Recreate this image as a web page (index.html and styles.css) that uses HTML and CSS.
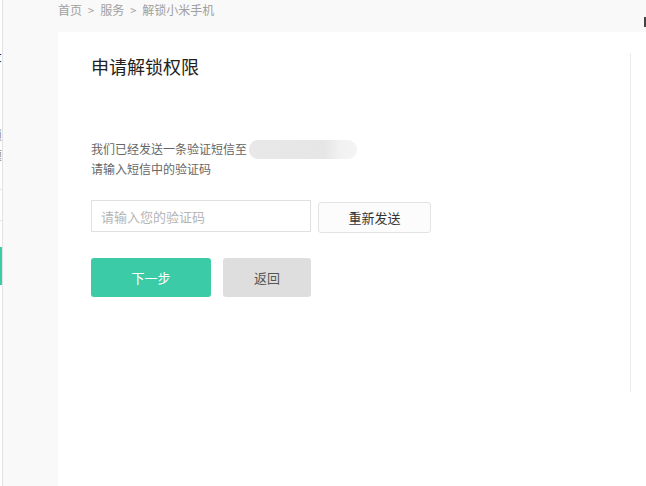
FILE: index.html
```html
<!DOCTYPE html>
<html lang="zh-CN">
<head>
    <meta charset="UTF-8">
    <meta name="viewport" content="width=device-width, initial-scale=1.0">
    <title>申请解锁权限</title>
    <link rel="stylesheet" href="styles.css">
</head>
<body>
    <div class="page">
        <!-- 左侧菜单（只露出右边一点） -->
        <div class="sidebar">
            <div class="side-inner">
                <div class="side-title">解锁记录</div>
                <div class="side-item side-item-first">申请解锁</div>
                <div class="side-item">常见问题</div>
                <div class="side-sep side-sep-first"></div>
                <div class="side-sep"></div>
                <div class="side-active"></div>
            </div>
        </div>

        <div class="main">
            <div class="crumb">
                <span>首页<i class="gt">&gt;</i>服务<i class="gt">&gt;</i>解锁小米手机</span>
                <span class="edge-mark"></span>
            </div>

            <div class="card">
                <div class="card-body">
                    <h2 class="title">申请解锁权限</h2>

                    <p class="desc">
                        我们已经发送一条验证短信至<span class="phone"></span><br>
                        请输入短信中的验证码
                    </p>

                    <div class="code-row">
                        <input class="code-input" type="text" placeholder="请输入您的验证码">
                        <button class="btn-resend">重新发送</button>
                    </div>

                    <div class="action-row">
                        <button class="btn btn-next">下一步</button>
                        <button class="btn btn-back">返回</button>
                    </div>
                </div>
                <div class="card-side"></div>
            </div>
        </div>
    </div>
</body>
</html>
```

FILE: styles.css
```css
html, body {
    margin: 0;
    height: 100%;
    overflow: hidden;
}
body {
    background: #f9f9f9;
    font-family: "Noto Sans CJK SC", "Liberation Sans", sans-serif;
    color: #333;
}
.page {
    display: flex;
    height: 100%;
}
.sidebar {
    width: 2px;
    flex: none;
    background: #fff;
    border-right: 1px solid #e3e3e3;
    overflow: hidden;
    display: flex;
    justify-content: flex-end;
}
.side-inner {
    width: 120px;
    flex: none;
    text-align: right;
}
.side-title {
    margin-top: 44px;
    font-size: 16px;
    line-height: 20px;
    color: #222;
}
.side-item {
    font-size: 12px;
    line-height: 20px;
    color: #888;
}
.side-item-first {
    margin-top: 61px;
}
.side-sep {
    height: 1px;
    background: #e3e3e3;
    margin-top: 30px;
}
.side-sep-first {
    margin-top: 24px;
}
.side-active {
    height: 38px;
    margin-top: 26px;
    background: #3bcca7;
}
.main {
    flex: 1;
    min-width: 0;
    margin-left: 55px;
    display: flex;
    flex-direction: column;
}
.crumb {
    height: 32px;
    display: flex;
    justify-content: space-between;
    font-size: 12px;
    line-height: 20px;
    color: #a0a0a0;
}
.gt {
    font-style: normal;
    font-size: 11px;
    margin: 0 6px;
}
.edge-mark {
    width: 2px;
    height: 10px;
    margin-top: 17px;
    background: #444;
}
.card {
    flex: 1;
    width: 720px;
    background: #fff;
    display: flex;
}
.card-body {
    width: 539px;
    flex: none;
    padding-left: 33px;
    padding-top: 21px;
}
.card-side {
    width: 100px;
    flex: none;
    height: 339px;
    margin-top: 21px;
    border-left: 1px solid #ececec;
}
.title {
    margin: 0;
    font-size: 18px;
    line-height: 26px;
    font-weight: normal;
    color: #222;
}
.desc {
    margin: 60px 0 0;
    font-size: 12px;
    line-height: 20px;
    color: #666;
}
.phone {
    display: inline-block;
    width: 108px;
    height: 19px;
    margin-left: 2px;
    vertical-align: -5px;
    border-radius: 9px;
    background: linear-gradient(90deg, #e8e8e8 0, #e6e6e6 70%, #f2f2f2 85%, #f4f4f4 100%);
}
.code-row {
    margin-top: 21px;
    display: flex;
    align-items: flex-start;
}
.code-input {
    width: 220px;
    height: 32px;
    box-sizing: border-box;
    border: 1px solid #e0e0e0;
    padding: 0 9px;
    font-family: inherit;
    font-size: 13px;
    outline: none;
}
.code-input::placeholder {
    color: #b5b5b5;
}
.btn-resend {
    width: 113px;
    height: 31px;
    margin-left: 7px;
    margin-top: 2px;
    border: 1px solid #e3e3e3;
    border-radius: 3px;
    background: #fcfcfc;
    font-family: inherit;
    font-size: 13px;
    color: #333;
    cursor: pointer;
}
.action-row {
    margin-top: 25px;
    display: flex;
    gap: 12px;
}
.btn {
    height: 39px;
    border: none;
    border-radius: 3px;
    font-family: inherit;
    font-size: 13px;
    cursor: pointer;
}
.btn-next {
    width: 120px;
    background: #3bcca7;
    color: #fff;
}
.btn-back {
    width: 88px;
    background: #dedede;
    color: #555;
}
```
